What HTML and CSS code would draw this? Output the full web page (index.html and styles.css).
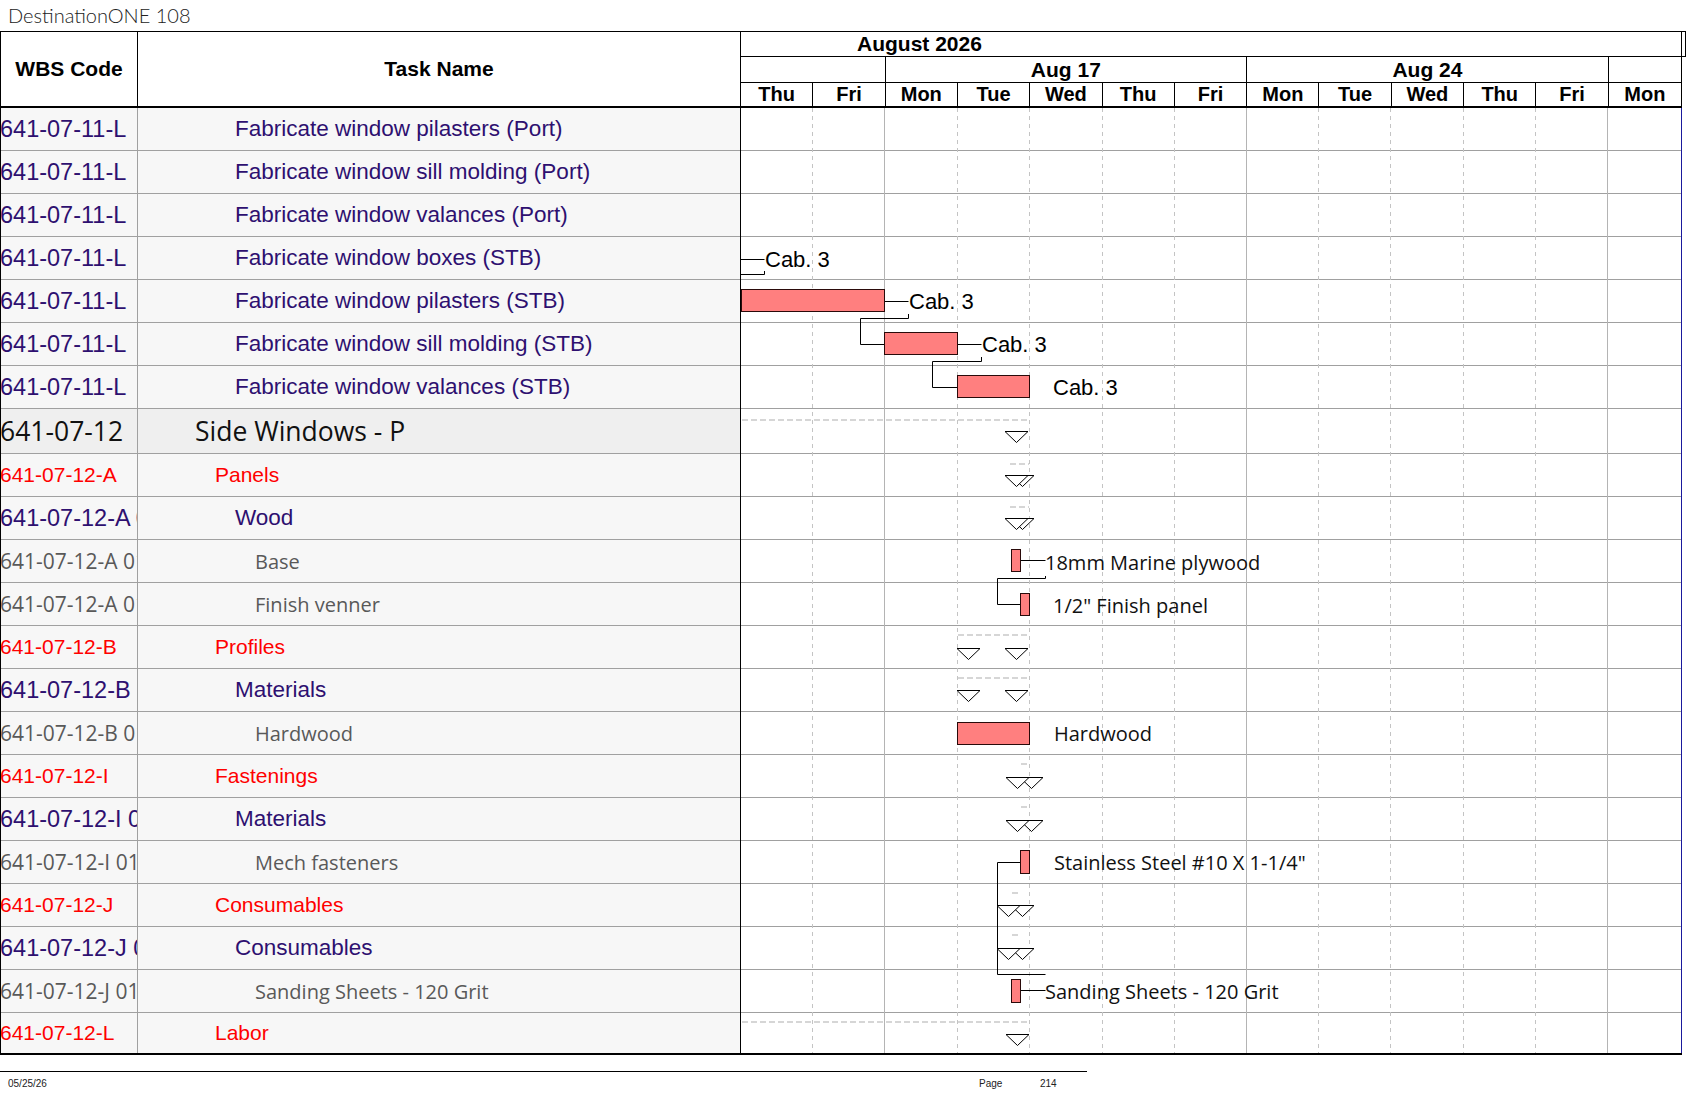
FILE: index.html
```html
<!DOCTYPE html>
<html lang="en">
<head>
<meta charset="utf-8">
<title>DestinationONE 108</title>
<link rel="stylesheet" href="styles.css">
</head>
<body>
<div class="title">DestinationONE 108</div>
<div class="chart">
  <div class="head">
    <div class="hcell">WBS Code</div>
    <div class="hcell">Task Name</div>
    <div class="timescale">
      <div class="month"><span>August 2026</span></div>
      <div class="weeks">
        <div class="wk span2"></div>
        <div class="wk span5">Aug 17</div>
        <div class="wk span5">Aug 24</div>
        <div class="wk span1"></div>
      </div>
      <div class="days">
        <div class="day">Thu</div><div class="day">Fri</div><div class="day">Mon</div><div class="day">Tue</div><div class="day">Wed</div><div class="day">Thu</div><div class="day">Fri</div><div class="day">Mon</div><div class="day">Tue</div><div class="day">Wed</div><div class="day">Thu</div><div class="day">Fri</div><div class="day">Mon</div>
      </div>
    </div>
  </div>
  <div class="body">
    <div class="table">
      <div class="row purple l2"><div class="wbs">641-07-11-L</div><div class="task">Fabricate window pilasters (Port)</div></div>
      <div class="row purple l2"><div class="wbs">641-07-11-L</div><div class="task">Fabricate window sill molding (Port)</div></div>
      <div class="row purple l2"><div class="wbs">641-07-11-L</div><div class="task">Fabricate window valances (Port)</div></div>
      <div class="row purple l2"><div class="wbs">641-07-11-L</div><div class="task">Fabricate window boxes (STB)</div></div>
      <div class="row purple l2"><div class="wbs">641-07-11-L</div><div class="task">Fabricate window pilasters (STB)</div></div>
      <div class="row purple l2"><div class="wbs">641-07-11-L</div><div class="task">Fabricate window sill molding (STB)</div></div>
      <div class="row purple l2"><div class="wbs">641-07-11-L</div><div class="task">Fabricate window valances (STB)</div></div>
      <div class="row sum l0"><div class="wbs">641-07-12</div><div class="task">Side Windows - P</div></div>
      <div class="row red l1"><div class="wbs">641-07-12-A</div><div class="task">Panels</div></div>
      <div class="row purple l2"><div class="wbs">641-07-12-A 01</div><div class="task">Wood</div></div>
      <div class="row gray l3"><div class="wbs">641-07-12-A 0101</div><div class="task">Base</div></div>
      <div class="row gray l3"><div class="wbs">641-07-12-A 0102</div><div class="task">Finish venner</div></div>
      <div class="row red l1"><div class="wbs">641-07-12-B</div><div class="task">Profiles</div></div>
      <div class="row purple l2"><div class="wbs">641-07-12-B 01</div><div class="task">Materials</div></div>
      <div class="row gray l3"><div class="wbs">641-07-12-B 0101</div><div class="task">Hardwood</div></div>
      <div class="row red l1"><div class="wbs">641-07-12-I</div><div class="task">Fastenings</div></div>
      <div class="row purple l2"><div class="wbs">641-07-12-I 01</div><div class="task">Materials</div></div>
      <div class="row gray l3"><div class="wbs">641-07-12-I 0101</div><div class="task">Mech fasteners</div></div>
      <div class="row red l1"><div class="wbs">641-07-12-J</div><div class="task">Consumables</div></div>
      <div class="row purple l2"><div class="wbs">641-07-12-J 01</div><div class="task">Consumables</div></div>
      <div class="row gray l3"><div class="wbs">641-07-12-J 0101</div><div class="task">Sanding Sheets - 120 Grit</div></div>
      <div class="row red l1"><div class="wbs">641-07-12-L</div><div class="task">Labor</div></div>
    </div>
    <div class="gantt">
      <svg class="gantt-svg" width="940" height="945" viewBox="0 0 940 945">
        <g class="hgrid">
          <path d="M0,42.5H940M0,85.5H940M0,128.5H940M0,171.5H940M0,214.5H940M0,257.5H940M0,300.5H940M0,345.5H940M0,388.5H940M0,431.5H940M0,474.5H940M0,517.5H940M0,560.5H940M0,603.5H940M0,646.5H940M0,689.5H940M0,732.5H940M0,775.5H940M0,818.5H940M0,861.5H940M0,904.5H940"/>
        </g>
        <g class="vdash">
          <path d="M71.5,0V945M216.5,0V945M288.5,0V945M361.5,0V945M433.5,0V945M577.5,0V945M649.5,0V945M722.5,0V945M794.5,0V945"/>
        </g>
        <g class="vsolid">
          <path d="M143.5,0V945M505.5,0V945M866.5,0V945"/>
        </g>
        <g class="sumdash">
          <path d="M1,312H288M269,356H288M269,399H288M217,527H288M217,570H288M280,656H287M280,699H287M271,785H279M271,827H279M1,914H288"/>
        </g>
        <g class="links">
          <path d="M0,151.5H23.5M0,166.5H23.5V163"/>
          <path d="M143.5,193.5H167.5M167.5,206V210.5H119.5V236.5H143.5"/>
          <path d="M216.5,236.5H240.5M240.5,249V253.5H191.5V279.5H216.5"/>
          <path d="M279.5,452.5H304.5M304.5,468V470.5H256.5V496.5H279.5"/>
          <path d="M279.5,754.5H256.5V866.5H304.5"/>
          <path d="M279.5,882.5H304.5"/>
        </g>
        <g class="bars">
          <rect x="0.5" y="181.5" width="143" height="22"/>
          <rect x="143.5" y="224.5" width="73" height="22"/>
          <rect x="216.5" y="267.5" width="72" height="22"/>
          <rect x="270.5" y="441.5" width="9" height="22"/>
          <rect x="279.5" y="485.5" width="9" height="22"/>
          <rect x="216.5" y="614.5" width="72" height="22"/>
          <rect x="279.5" y="742.5" width="9" height="23"/>
          <rect x="270.5" y="871.5" width="9" height="23"/>
        </g>
        <g class="ms">
          <polygon points="264,323.5 287,323.5 275.5,334.5"/>
          <polygon points="270,367.5 293,367.5 281.5,378.5"/>
          <polygon points="264,367.5 287,367.5 275.5,378.5"/>
          <polygon points="270,410.5 293,410.5 281.5,421.5"/>
          <polygon points="264,410.5 287,410.5 275.5,421.5"/>
          <polygon points="216,540.5 239,540.5 227.5,551.5"/>
          <polygon points="264,540.5 287,540.5 275.5,551.5"/>
          <polygon points="216,582.5 239,582.5 227.5,593.5"/>
          <polygon points="264,582.5 287,582.5 275.5,593.5"/>
          <polygon points="279,669.5 302,669.5 290.5,680.5"/>
          <polygon points="265,669.5 288,669.5 276.5,680.5"/>
          <polygon points="279,712.5 302,712.5 290.5,723.5"/>
          <polygon points="265,712.5 288,712.5 276.5,723.5"/>
          <polygon points="270,797.5 293,797.5 281.5,808.5"/>
          <polygon points="256,797.5 279,797.5 267.5,808.5"/>
          <polygon points="270,840.5 293,840.5 281.5,851.5"/>
          <polygon points="256,840.5 279,840.5 267.5,851.5"/>
          <polygon points="265,926.5 288,926.5 276.5,937.5"/>
        </g>
        <g class="lbl-arial">
          <text x="24" y="159">Cab. 3</text>
          <text x="168" y="201">Cab. 3</text>
          <text x="241" y="244">Cab. 3</text>
          <text x="312" y="287">Cab. 3</text>
        </g>
        <g class="lbl-sans">
          <text x="304" y="462">18mm Marine plywood</text>
          <text x="312" y="505">1/2" Finish panel</text>
          <text x="313" y="633">Hardwood</text>
          <text x="313" y="762">Stainless Steel #10 X 1-1/4"</text>
          <text x="304" y="891">Sanding Sheets - 120 Grit</text>
        </g>
      </svg>
    </div>
  </div>
</div>
<div class="footer">
  <span>05/25/26</span>
  <span>Page</span>
  <span>214</span>
</div>
</body>
</html>
```
FILE: styles.css
```css
html, body {
  margin: 0;
  padding: 0;
  background: #ffffff;
}

body {
  width: 1687px;
  font-family: "Liberation Sans", Arial, sans-serif;
  color: #000;
}

.title {
  height: 31px;
  padding-left: 8px;
  font-family: Lato, "Liberation Sans", sans-serif;
  font-weight: 300;
  font-size: 20px;
  line-height: 31px;
  color: #222;
}

.chart {
  width: 1682px;
}

/* ---------- header ---------- */
.head {
  display: grid;
  grid-template-columns: 137px 603px 940px;
  height: 77px;
  box-sizing: border-box;
  border-top: 1px solid #000;
  border-left: 1px solid #000;
  border-right: 1px solid #000;
}

.hcell {
  display: flex;
  align-items: center;
  justify-content: center;
  box-sizing: border-box;
  border-right: 1px solid #000;
  border-bottom: 2px solid #000;
  font-weight: bold;
  font-size: 21px;
}

.timescale {
  display: flex;
  flex-direction: column;
  min-width: 0;
}

.month {
  height: 26px;
  margin-top: -1px;
  margin-right: -5px;
  box-sizing: border-box;
  border-top: 1px solid #000;
  border-right: 1px solid #000;
  border-bottom: 1px solid #000;
  font-weight: bold;
  font-size: 21px;
  line-height: 24px;
  white-space: nowrap;
}

.month span {
  padding-left: 116px;
}

.weeks {
  display: grid;
  grid-template-columns: repeat(13, 1fr);
  height: 26px;
  box-sizing: border-box;
  border-bottom: 1px solid #000;
}

.wk {
  border-right: 1px solid #000;
  text-align: center;
  font-weight: bold;
  font-size: 21px;
  line-height: 25px;
  white-space: nowrap;
}

.wk:last-child {
  border-right: 0;
}

.span1 { grid-column: span 1; }
.span2 { grid-column: span 2; }
.span5 { grid-column: span 5; }

.days {
  display: grid;
  grid-template-columns: repeat(13, 1fr);
  height: 25px;
  box-sizing: border-box;
  border-bottom: 2px solid #000;
}

.day {
  border-right: 1px solid #000;
  text-align: center;
  font-weight: bold;
  font-size: 20px;
  line-height: 23px;
}

.day:last-child {
  border-right: 0;
}

/* ---------- body ---------- */
.body {
  display: flex;
  border-left: 1px solid #000;
  border-bottom: 2px solid #000;
}

.table {
  width: 740px;
  box-sizing: border-box;
  border-right: 1px solid #000;
  flex: none;
}

.row {
  display: grid;
  grid-template-columns: 137px 602px;
  height: 43px;
  box-sizing: border-box;
  border-bottom: 1px solid #a0a0a0;
  background: #f7f7f7;
}

.row:last-child {
  height: 40px;
  border-bottom: 0;
}

.row.sum {
  height: 45px;
  background: #efefef;
}

.wbs {
  display: flex;
  align-items: center;
  overflow: hidden;
  white-space: nowrap;
  border-right: 1px solid #a0a0a0;
  text-indent: -1px;
}

.task {
  display: flex;
  align-items: center;
  overflow: hidden;
  white-space: nowrap;
}

.l0 .task { padding-left: 57px; }
.l1 .task { padding-left: 77px; }
.l2 .task { padding-left: 97px; }
.l3 .task { padding-left: 117px; }

.purple {
  color: #2e1070;
  font-family: "Liberation Sans", Arial, sans-serif;
  font-size: 22.5px;
}

.purple .wbs {
  font-size: 23.5px;
}

.red {
  color: #ff0000;
  font-family: "Liberation Sans", Arial, sans-serif;
  font-size: 21px;
}

.gray {
  color: #595959;
  font-family: "Open Sans", "Noto Sans", sans-serif;
  font-size: 20px;
}

.gray .wbs {
  font-size: 21px;
}

.sum {
  color: #111;
  font-family: "Open Sans", "Noto Sans", sans-serif;
  font-size: 26.5px;
}

.gantt {
  width: 940px;
  flex: none;
  border-right: 1px solid #1a1a9c;
  background: #fff;
}

.gantt-svg {
  display: block;
}

.hgrid path {
  stroke: #a0a0a0;
  stroke-width: 1;
  fill: none;
}

.vdash path {
  stroke: #c4c4c4;
  stroke-width: 1;
  stroke-dasharray: 4 4;
  fill: none;
}

.vsolid path {
  stroke: #b4b4b4;
  stroke-width: 1;
  fill: none;
}

.sumdash path {
  stroke: #d6d6d6;
  stroke-width: 2;
  stroke-dasharray: 6 3;
  fill: none;
}

.links path {
  stroke: #000;
  stroke-width: 1;
  fill: none;
}

.bars rect {
  fill: #ff7f7f;
  stroke: #2a0a0a;
  stroke-width: 1;
}

.ms polygon {
  fill: #fff;
  stroke: #000;
  stroke-width: 1;
}

.lbl-arial text {
  font-family: "Liberation Sans", Arial, sans-serif;
  font-size: 22px;
  fill: #000;
}

.lbl-sans text {
  font-family: "Open Sans", "Noto Sans", sans-serif;
  font-size: 20px;
  fill: #111;
}

/* ---------- footer ---------- */
.footer {
  display: grid;
  grid-template-columns: 971px 61px auto;
  width: 1079px;
  margin-top: 16px;
  padding-left: 8px;
  padding-top: 6px;
  border-top: 1px solid #000;
  font-family: "Liberation Sans", Arial, sans-serif;
  font-size: 10px;
  line-height: 12px;
  color: #222;
}
```
